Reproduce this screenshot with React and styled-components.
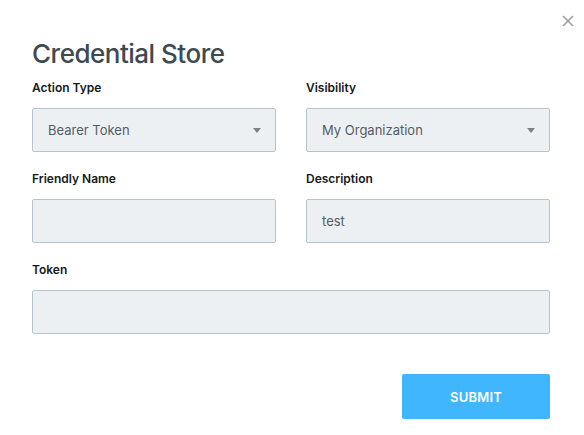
import React from "react";
import styled, { createGlobalStyle } from "styled-components";

const Global = createGlobalStyle`
  html, body { margin: 0; padding: 0; background: #fff; }
  body { font-family: Inter, "Noto Sans", sans-serif; }
  * { box-sizing: border-box; }
`;

const Modal = styled.div`
  position: relative;
  width: 584px;
  height: 435px;
  background: #fff;
  padding: 38px 34px 0 32px;
`;

const Close = styled.button`
  position: absolute;
  top: 13px;
  right: 8px;
  width: 16px;
  height: 16px;
  padding: 0;
  border: 0;
  background: none;
  display: flex;
  align-items: center;
  justify-content: center;
`;

const Title = styled.h1`
  margin: 0 0 10px;
  font-size: 26px;
  line-height: 32px;
  font-weight: 500;
  letter-spacing: -0.5px;
  color: #3d4a52;
`;

const Grid = styled.div`
  display: grid;
  grid-template-columns: 244px 244px;
  column-gap: 30px;
  row-gap: 19px;
`;

const Field = styled.div`
  display: flex;
  flex-direction: column;
  grid-column: ${(p) => (p.$wide ? "1 / -1" : "auto")};
`;

const Label = styled.label`
  font-size: 12px;
  line-height: 16px;
  font-weight: 600;
  color: #15191c;
  margin-bottom: 12px;
`;

const Box = styled.div`
  height: 44px;
  background: #edf0f3;
  border: 1px solid #b8c4cc;
  border-radius: 2px;
  display: flex;
  align-items: center;
  justify-content: space-between;
  padding: 0 14px 0 15px;
  font-size: 13px;
  color: #555d63;
`;

const Caret = styled.span`
  width: 0;
  height: 0;
  border-left: 4px solid transparent;
  border-right: 4px solid transparent;
  border-top: 5px solid #7b8186;
`;

const Footer = styled.div`
  display: flex;
  justify-content: flex-end;
  margin-top: 40px;
`;

const Submit = styled.button`
  width: 148px;
  height: 45px;
  border: 0;
  border-radius: 2px;
  background: #3fb6fe;
  color: #fff;
  font-family: Inter, sans-serif;
  font-size: 13px;
  font-weight: 600;
  letter-spacing: 0.2px;
`;

export default function App() {
  return (
    <>
      <Global />
      <Modal>
        <Close aria-label="close">
          <svg width="12" height="12" viewBox="0 0 12 12">
            <path d="M1 1L11 11M11 1L1 11" stroke="#9aa0a5" strokeWidth="1.6" />
          </svg>
        </Close>
        <Title>Credential Store</Title>
        <Grid>
          <Field>
            <Label>Action Type</Label>
            <Box>Bearer Token<Caret /></Box>
          </Field>
          <Field>
            <Label>Visibility</Label>
            <Box>My Organization<Caret /></Box>
          </Field>
          <Field>
            <Label>Friendly Name</Label>
            <Box />
          </Field>
          <Field>
            <Label>Description</Label>
            <Box>test</Box>
          </Field>
          <Field $wide>
            <Label>Token</Label>
            <Box />
          </Field>
        </Grid>
        <Footer>
          <Submit>SUBMIT</Submit>
        </Footer>
      </Modal>
    </>
  );
}
